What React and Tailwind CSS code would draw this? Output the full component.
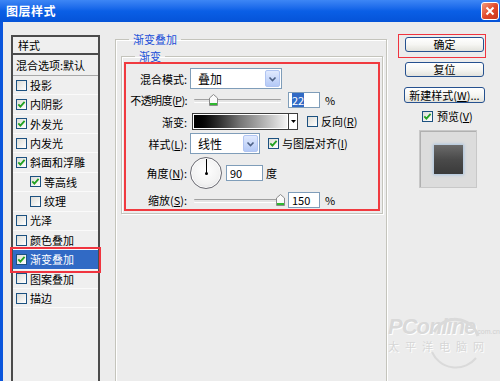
import React from "react";

const FONT = { fontFamily: '"Noto Sans CJK SC", "Noto Sans", sans-serif' };

function Check({ checked }) {
  return (
    <span className="flex h-[11px] w-[11px] shrink-0 items-center justify-center border border-[#1c5180] bg-gradient-to-br from-[#dcdcd7] to-white">
      {checked && (
        <svg width="9" height="9" viewBox="0 0 9 9">
          <path d="M1.3 4.3 L3.4 6.6 L7.6 1.8" fill="none" stroke="#21a121" strokeWidth="1.8" />
        </svg>
      )}
    </span>
  );
}

function Chevron() {
  return (
    <span className="m-[1px] flex w-[15px] items-center justify-center rounded-[2px] border border-[#b1c5f2] bg-gradient-to-b from-[#e1eafe] to-[#b4c9f6]">
      <svg width="9" height="8" viewBox="0 0 9 8">
        <path d="M1.5 2.5 L4.5 5.5 L7.5 2.5" fill="none" stroke="#4d6185" strokeWidth="1.6" />
      </svg>
    </span>
  );
}

function Select({ value, w }) {
  return (
    <div className={`flex h-[21px] ${w} items-stretch border border-[#7f9db9] bg-white`}>
      <span className="flex-1 pl-[7px] text-[12px] leading-[19px]">{value}</span>
      <Chevron />
    </div>
  );
}

function Thumb() {
  return (
    <svg width="9" height="12" viewBox="0 0 9 12">
      <path d="M0.5 4 L4.5 0.5 L8.5 4 L8.5 11.5 L0.5 11.5 Z" fill="#fafafa" stroke="#8a8a8a" />
      <rect x="1" y="9" width="7" height="2" fill="#2eb82e" />
    </svg>
  );
}

function Slider({ left }) {
  return (
    <div className="relative h-[14px] w-[87px] shrink-0">
      <div className="absolute left-0 right-0 top-[6px] h-[3px] rounded-[1px] border-t border-[#a0a0a0] bg-[#e4e4e4] shadow-[0_1px_0_#fff]" />
      <div className="absolute top-[1px]" style={{ left }}>
        <Thumb />
      </div>
    </div>
  );
}

function Num({ children, w = "w-[32px]" }) {
  return (
    <div className={`flex h-[16px] ${w} items-center border border-[#7f9db9] bg-white pl-[3px] text-[11px] leading-[14px]`}>
      {children}
    </div>
  );
}

function U({ c }) {
  return (
    <>
      (<span className="underline">{c}</span>)
    </>
  );
}

function Label({ children, tight }) {
  return (
    <div className="flex w-[64px] shrink-0 justify-end pr-[3px]">
      <span className={`whitespace-nowrap text-[11px] leading-[16px] ${tight ? "tracking-[-0.6px]" : ""}`}>{children}</span>
    </div>
  );
}

function Btn({ children }) {
  return (
    <div className="flex h-[15px] w-[79px] items-center justify-center rounded-[3px] border border-[#26518f] bg-gradient-to-b from-white via-[#f6f6f3] to-[#e2e2dc] text-[11px] leading-[13px] text-black">
      {children}
    </div>
  );
}

const items = [
  { t: "投影", c: false },
  { t: "内阴影", c: true },
  { t: "外发光", c: true },
  { t: "内发光", c: false },
  { t: "斜面和浮雕", c: true },
  { t: "等高线", c: true, ind: true },
  { t: "纹理", c: false, ind: true },
  { t: "光泽", c: false },
  { t: "颜色叠加", c: false },
  { t: "渐变叠加", c: true, sel: true },
  { t: "图案叠加", c: false },
  { t: "描边", c: false },
];

export default function App() {
  return (
    <div className="relative flex h-[381px] w-[500px] flex-col overflow-hidden bg-[#ececec] text-black" style={FONT}>
      {/* Title bar */}
      <div className="flex h-[22px] shrink-0 items-center justify-between bg-gradient-to-b from-[#3d86f5] via-[#0a5fe6] to-[#0553d8] pl-[6px] pr-[1px]">
        <span className="text-[12px] font-bold leading-[14px] tracking-[0.5px] text-white">图层样式</span>
        <span className="flex h-[18px] w-[18px] items-center justify-center rounded-[3px] border border-white bg-gradient-to-br from-[#f09a7e] via-[#e2492b] to-[#c8361c]">
          <svg width="10" height="10" viewBox="0 0 10 10">
            <path d="M1.5 1.5 L8.5 8.5 M8.5 1.5 L1.5 8.5" stroke="#fff" strokeWidth="2" />
          </svg>
        </span>
      </div>

      {/* Body */}
      <div className="flex flex-1 items-start border-l-[3px] border-[#0a55dc]">
        {/* Left list */}
        <div className="ml-[8px] mt-[13px] flex h-[400px] w-[89px] shrink-0 flex-col border-x-2 border-[#4b4b4b] bg-[#efefef]">
          <div className="-mx-[2px] flex h-[20px] items-center border-2 border-[#4b4b4b] px-[5px] text-[11px]">
            样式
          </div>
          <div className="flex h-[21px] items-center whitespace-nowrap border-b border-[#a8a8a8] pl-[3px] text-[11px]">
            混合选项:默认
          </div>
          {items.map((it) => (
            <div
              key={it.t}
              className={`flex h-[19.36px] items-center gap-[3px] whitespace-nowrap border-b border-[#fafafa] text-[11px] ${
                it.ind ? "pl-[17px]" : "pl-[3px]"
              } ${it.sel ? "bg-[#316ac5] text-white outline-2 outline-offset-[1px] outline-[#f0343f]" : ""}`}
            >
              <Check checked={it.c} />
              <span>{it.t}</span>
            </div>
          ))}
        </div>

        {/* Middle */}
        <fieldset className="ml-[15px] mt-[10px] h-[400px] w-[272px] shrink-0 border border-[#c4c4bc] pl-[5px] pr-[3px] shadow-[inset_1px_1px_0_#fff,1px_1px_0_#fff]">
          <legend className="ml-[8px] px-[4px] text-[11px] leading-[14px] text-[#1b4fd8]">渐变叠加</legend>
          <fieldset className="mt-[3px] border border-[#c4c4bc] pb-[2px] pl-[2px] pr-[2px] shadow-[inset_1px_1px_0_#fff,1px_1px_0_#fff]">
            <legend className="ml-[11px] px-[4px] text-[11px] leading-[14px] text-[#1b4fd8]">渐变</legend>
            <div className="-mt-[1px] flex flex-col border-2 border-[#f03a3f] pt-[4px]">
              {/* 混合模式 */}
              <div className="flex h-[21px] items-center">
                <Label>混合模式:</Label>
                <Select value="叠加" w="w-[92px]" />
              </div>
              {/* 不透明度 */}
              <div className="mt-[3px] flex h-[16px] items-center">
                <Label tight>
                  不透明度<U c="P" />:
                </Label>
                <div className="ml-[4px]">
                  <Slider left="15px" />
                </div>
                <div className="ml-[7px]">
                  <Num>
                    <span className="bg-[#316ac5] text-white">22</span>
                  </Num>
                </div>
                <span className="ml-[5px] text-[11px]">%</span>
              </div>
              {/* 渐变 */}
              <div className="mt-[5px] flex h-[17px] items-center">
                <Label>渐变:</Label>
                <div className="ml-[2px] flex h-[17px] w-[106px] border border-[#3c3c3c] bg-white">
                  <div className="m-[1px] flex-1 bg-gradient-to-r from-black via-[#777] to-[#f4f4f4]" />
                  <div className="flex w-[9px] items-center justify-center border-l border-[#3c3c3c]">
                    <svg width="5" height="3" viewBox="0 0 5 3">
                      <path d="M0 0 L5 0 L2.5 3 Z" fill="#000" />
                    </svg>
                  </div>
                </div>
                <span className="ml-[9px]">
                  <Check checked={false} />
                </span>
                <span className="ml-[3px] text-[11px]">
                  反向<U c="R" />
                </span>
              </div>
              {/* 样式 */}
              <div className="mt-[3px] flex h-[21px] items-center">
                <Label>
                  样式<U c="L" />:
                </Label>
                <Select value="线性" w="w-[70px]" />
                <span className="ml-[8px]">
                  <Check checked />
                </span>
                <span className="ml-[3px] text-[11px]">
                  与图层对齐<U c="I" />
                </span>
              </div>
              {/* 角度 */}
              <div className="mt-[3px] flex h-[32px] items-center">
                <Label>
                  角度<U c="N" />:
                </Label>
                <div className="relative h-[32px] w-[32px] shrink-0 rounded-full border border-[#6a6a72] bg-[radial-gradient(circle_at_50%_40%,#ffffff_0%,#f2f2f2_60%,#d4d4d8_100%)] shadow-[inset_0_0_0_1px_#fff]">
                  <div className="absolute left-[14.5px] top-[1px] h-[14px] w-[1.5px] bg-black" />
                  <div className="absolute left-[13.5px] top-[13.5px] h-[3px] w-[3px] rounded-full bg-black" />
                </div>
                <div className="ml-[4px]">
                  <Num w="w-[37px]">90</Num>
                </div>
                <span className="ml-[3px] text-[11px]">度</span>
              </div>
              {/* 缩放 */}
              <div className="mb-[1px] mt-[3px] flex h-[16px] items-center">
                <Label>
                  缩放<U c="S" />:
                </Label>
                <div className="ml-[4px]">
                  <Slider left="82px" />
                </div>
                <div className="ml-[7px]">
                  <Num>150</Num>
                </div>
                <span className="ml-[5px] text-[11px]">%</span>
              </div>
            </div>
          </fieldset>
        </fieldset>

        {/* Right */}
        <div className="ml-[18px] mt-[15px] flex w-[80px] shrink-0 flex-col items-start">
          <div className="relative">
            <Btn>确定</Btn>
            <span className="absolute -bottom-[6px] -left-[7px] -right-[2px] -top-[3px] border-[1.5px] border-[#f0343f]" />
          </div>
          <div className="mt-[10px]">
            <Btn>复位</Btn>
          </div>
          <div className="-ml-[1px] mt-[10px]">
            <div className="flex h-[16px] w-[81px] items-center justify-center whitespace-nowrap rounded-[3px] border border-[#26518f] bg-gradient-to-b from-white via-[#f6f6f3] to-[#e2e2dc] text-[11px] leading-[13px]">
              新建样式<span>(</span>
              <span className="underline">W</span>
              <span>)...</span>
            </div>
          </div>
          <div className="ml-[17px] mt-[6px] flex h-[14px] items-center gap-[4px] text-[11px]">
            <Check checked />
            <span>
              预览<U c="V" />
            </span>
          </div>
          <div className="ml-[14px] mt-[7px] flex h-[58px] w-[58px] items-center justify-center border border-[#c8c8c8] bg-[#dcdcdc] shadow-[inset_1px_1px_0_#b0b0b0]">
            <div className="h-[29px] w-[29px] bg-gradient-to-b from-[#6b6b6b] via-[#4a4a4a] to-[#3a3a3a] shadow-[0_0_3px_1px_#a9c4e0]" />
          </div>
        </div>
      </div>

      {/* Watermark */}
      <div className="pointer-events-none absolute left-[388px] top-[316px] flex flex-col items-start">
        <svg className="absolute left-[38px] top-[-4px]" width="60" height="58" viewBox="0 0 60 58">
          <path d="M8 20 A24 24 0 0 1 52 24" fill="none" stroke="#dadada" strokeWidth="3" />
          <path d="M6 40 A26 26 0 0 0 50 46" fill="none" stroke="#dadada" strokeWidth="2" />
        </svg>
        <div className="flex items-end">
          <span className="text-[22px] font-bold italic leading-[22px] tracking-[-1px] text-[#d9d9d9]" style={{ fontFamily: '"Liberation Sans", sans-serif', textShadow: "1px 1px 0 #fff" }}>
            PConline
          </span>
          <span className="mb-[2px] text-[7px] leading-[8px] text-[#d0d0d0]" style={{ fontFamily: '"Liberation Sans", sans-serif' }}>
            .com.cn
          </span>
        </div>
        <span className="mt-[2px] text-[11px] leading-[12px] tracking-[6px] text-[#d6d6d6]" style={{ textShadow: "1px 1px 0 #fff" }}>
          太平洋电脑网
        </span>
      </div>
    </div>
  );
}
